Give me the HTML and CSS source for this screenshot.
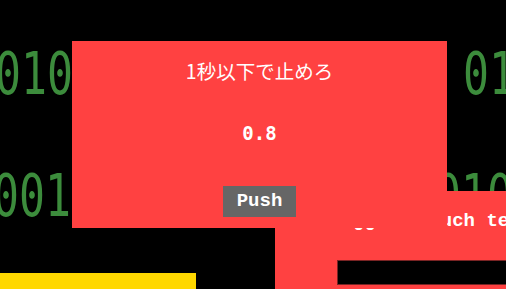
FILE: index.html
```html
<!DOCTYPE html>
<html lang="ja">
<head>
<meta charset="UTF-8">
<meta name="viewport" content="width=device-width, initial-scale=1.0">
<title>1秒以下で止めろ</title>
<link rel="stylesheet" href="styles.css">
</head>
<body>
<div class="desk">
    <!-- 背景の2進数 -->
    <div class="matrix">
        <div class="bits bits-a">01011010011010010 011</div>
        <div class="bits bits-b">0011010110100101101011</div>
    </div>

    <!-- 下にあるウィンドウ -->
    <div class="win win-touch">
        <div class="touch-title">Touch test</div>
        <div class="touch-hint">00</div>
        <div class="touch-input"></div>
    </div>

    <div class="win win-yellow"></div>

    <!-- メインのゲーム -->
    <div class="win win-game">
        <div class="game-title">1秒以下で止めろ</div>
        <div class="game-time">0.8</div>
        <button class="push-btn">Push</button>
    </div>
</div>
</body>
</html>
```

FILE: styles.css
```css
html, body{
    margin: 0;
    padding: 0;
    background-color: #000;
}
.desk{
    width: 506px;
    height: 289px;
    position: relative;
    overflow: hidden;
}
.matrix{
    padding-top: 13px;
}
.bits{
    font-family: "DejaVu Sans Mono", monospace;
    font-size: 58px;
    line-height: 122px;
    color: #3c8c3c;
    white-space: pre;
    transform: scaleX(0.7446);
    transform-origin: left top;
}
.bits-a{
    margin-left: -5.5px;
}
.bits-b{
    margin-left: -7.5px;
}
.win{
    position: absolute;
    box-sizing: border-box;
}
.win-game{
    left: 72px;
    top: 41px;
    width: 375px;
    height: 187px;
    background-color: #ff4141;
    padding-top: 18px;
    display: flex;
    flex-direction: column;
    align-items: center;
    z-index: 3;
}
.game-title{
    font-family: "Noto Sans CJK JP", "Noto Sans", sans-serif;
    font-size: 19.5px;
    line-height: 24px;
    color: #fff;
}
.game-time{
    margin-top: 38px;
    font-family: "DejaVu Sans Mono", monospace;
    font-weight: bold;
    font-size: 19px;
    line-height: 24px;
    color: #fff;
}
.push-btn{
    margin-top: 41px;
    padding: 5px 14px;
    border: none;
    background-color: #666;
    color: #fff;
    font-family: "Liberation Mono", monospace;
    font-weight: bold;
    font-size: 19px;
    line-height: 21px;
}
.win-touch{
    left: 275px;
    top: 191px;
    width: 400px;
    height: 130px;
    background-color: #ff4141;
    padding-top: 19px;
    z-index: 1;
}
.touch-title{
    text-align: center;
    font-family: "Liberation Mono", monospace;
    font-weight: bold;
    font-size: 19px;
    line-height: 23px;
    color: #fff;
}
.touch-hint{
    margin: -19px 0 0 78px;
    font-family: "Liberation Mono", monospace;
    font-weight: bold;
    font-size: 19px;
    line-height: 23px;
    color: #fff;
}
.touch-input{
    margin: 23px 0 0 62px;
    width: 300px;
    height: 25px;
    box-sizing: border-box;
    background-color: #000;
    border: 1px solid #7a2424;
}
.win-yellow{
    left: 0;
    top: 273px;
    width: 196px;
    height: 40px;
    background-color: #ffd800;
    z-index: 2;
}
```
